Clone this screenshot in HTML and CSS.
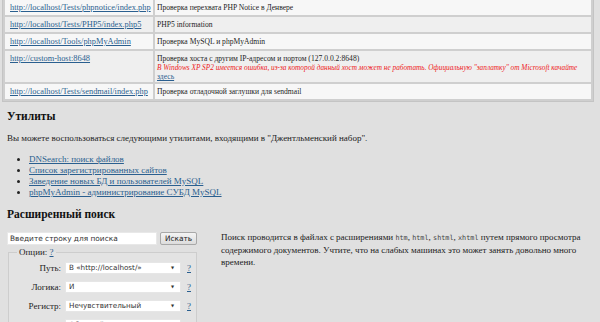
FILE: index.html
```html
<!DOCTYPE html>
<html lang="ru">
<head>
<meta charset="utf-8">
<link rel="stylesheet" href="styles.css">
</head>
<body>
<div class="page">
  <table class="tests">
    <tr class="odd">
      <td class="url"><a href="#">http://localhost/Tests/phpnotice/index.php</a></td>
      <td class="desc">Проверка перехвата PHP Notice в Денвере</td>
    </tr>
    <tr class="even">
      <td class="url"><a href="#">http://localhost/Tests/PHP5/index.php5</a></td>
      <td class="desc">PHP5 information</td>
    </tr>
    <tr class="odd">
      <td class="url"><a href="#">http://localhost/Tools/phpMyAdmin</a></td>
      <td class="desc">Проверка MySQL и phpMyAdmin</td>
    </tr>
    <tr class="even">
      <td class="url"><a href="#">http://custom-host:8648</a></td>
      <td class="desc">Проверка хоста с другим IP-адресом и портом (127.0.0.2:8648)<br>
        <em class="warn">В Windows XP SP2 имеется ошибка, из-за которой данный хост может не работать. Официальную "заплатку" от Microsoft качайте</em> <a href="#">здесь</a></td>
    </tr>
    <tr class="odd">
      <td class="url"><a href="#">http://localhost/Tests/sendmail/index.php</a></td>
      <td class="desc">Проверка отладочной заглушки для sendmail</td>
    </tr>
  </table>

  <section class="section">
    <h2 class="title title-first">Утилиты</h2>
    <p class="text">Вы можете воспользоваться следующими утилитами, входящими в "Джентльменский набор".</p>
    <ul class="utils">
      <li><a href="#">DNSearch: поиск файлов</a></li>
      <li><a href="#">Список зарегистрированных сайтов</a></li>
      <li><a href="#">Заведение новых БД и пользователей MySQL</a></li>
      <li><a href="#">phpMyAdmin - администрирование СУБД MySQL</a></li>
    </ul>

    <h2 class="title title-second">Расширенный поиск</h2>
    <div class="search">
      <form class="search-form">
        <div class="query">
          <input class="query-input" type="text" value="Введите строку для поиска">
          <button class="btn" type="button">Искать</button>
        </div>
        <fieldset class="options">
          <legend class="legend">Опции: <a href="#">?</a></legend>
          <div class="opt-row">
            <span class="opt-label">Путь:</span>
            <span class="select">В «http://localhost/»<span class="arrow">▼</span></span>
            <a class="help" href="#">?</a>
          </div>
          <div class="opt-row">
            <span class="opt-label">Логика:</span>
            <span class="select">И<span class="arrow">▼</span></span>
            <a class="help" href="#">?</a>
          </div>
          <div class="opt-row">
            <span class="opt-label">Регистр:</span>
            <span class="select">Нечувствительный<span class="arrow">▼</span></span>
            <a class="help" href="#">?</a>
          </div>
          <div class="opt-row">
            <span class="opt-label">Вывод:</span>
            <span class="select">Обычный<span class="arrow">▼</span></span>
            <a class="help" href="#">?</a>
          </div>
        </fieldset>
      </form>
      <p class="search-note">Поиск проводится в файлах с расширениями <code>htm</code>, <code>html</code>, <code>shtml</code>, <code>xhtml</code> путем прямого просмотра содержимого документов. Учтите, что на слабых машинах это может занять довольно много времени.</p>
    </div>
  </section>
</div>
</body>
</html>
```

FILE: styles.css
```css
html, body {
  margin: 0;
  padding: 0;
  background: #e0e0e0;
  height: 322px;
  overflow: hidden;
}
body {
  font-family: "Liberation Serif", "DejaVu Serif", "Times New Roman", serif;
  font-size: 9px;
  color: #222;
}
a { color: #2a5f8f; }

.page {
  margin-top: -3px;
}

.tests {
  margin: 0 6px 0 2px;
  width: 592px;
  border-collapse: separate;
  border-spacing: 2px;
  background: #cfcfcf;
  border: 1px solid #c4c4c4;
}
.tests td {
  vertical-align: top;
  line-height: 9px;
  height: 11px;
}
.tests tr.odd td { background: #f7f7f7; }
.tests tr.even td { background: #efefef; }
.url {
  width: 142px;
  font-size: 8.4px;
  white-space: nowrap;
  padding: 3px 1px 1px 5px;
}
.desc {
  font-size: 7.6px;
  color: #1e1e1e;
  padding: 3px 1px 1px 2px;
}
.warn {
  color: #ee2222;
  font-size: 7.3px;
}

.section {
  padding: 0 7px;
}
.title {
  font-size: 11.5px;
  font-weight: bold;
  line-height: 14px;
  color: #111;
  margin: 0;
}
.title-first { margin-top: 7px; }
.title-second { margin-top: 9px; }
.text {
  margin: 10px 0 0;
  line-height: 11px;
}
.utils {
  margin: 10px 0 0;
  padding-left: 22px;
  line-height: 11px;
}
.utils li { list-style: disc; }

.search {
  display: flex;
  gap: 24px;
  margin-top: 11px;
}
.search-form {
  width: 190px;
  flex: none;
}
.query {
  display: flex;
  gap: 3px;
  height: 13px;
}
.query-input {
  width: 150px;
  box-sizing: border-box;
  height: 13px;
  margin: 0;
  padding: 0 2px;
  border: 1px solid #e8e8e8;
  background: #fff;
  font-family: "DejaVu Sans", Verdana, sans-serif;
  font-size: 7.4px;
  color: #333;
}
.btn {
  width: 37px;
  height: 13px;
  padding: 0;
  margin: 0;
  border: 1px solid #a8a8a8;
  border-radius: 2px;
  background: linear-gradient(#f4f4f4, #dcdcdc);
  font-family: "DejaVu Sans", Verdana, sans-serif;
  font-size: 7.4px;
  color: #222;
}

.options {
  margin: 2px 0 0 1px;
  padding: 0;
  border: 1px solid #cdcdcd;
  width: 189px;
  box-sizing: border-box;
  background: #e3e3e3;
}
.legend {
  padding: 0 2px;
  margin-left: 8px;
  font-size: 9px;
  line-height: 10px;
}
.opt-row {
  display: flex;
  align-items: center;
  height: 19px;
}
.opt-row:first-of-type { margin-top: 1px; }
.opt-label {
  width: 52px;
  text-align: right;
  padding-right: 4px;
  flex: none;
}
.select {
  display: flex;
  justify-content: space-between;
  align-items: center;
  width: 116px;
  height: 12px;
  box-sizing: border-box;
  padding: 0 6px 0 3px;
  background: #fff;
  border: 1px solid #e6e6e6;
  font-family: "DejaVu Sans", Verdana, sans-serif;
  font-size: 7.2px;
  color: #333;
}
.arrow {
  font-size: 4px;
  color: #333;
}
.help {
  margin-left: 6px;
  font-size: 9px;
}

.search-note {
  margin: -1px 0 0;
  width: 370px;
  line-height: 12px;
}
.search-note code {
  font-family: "DejaVu Sans Mono", "Liberation Mono", monospace;
  font-size: 6.8px;
  color: #444;
}
```
